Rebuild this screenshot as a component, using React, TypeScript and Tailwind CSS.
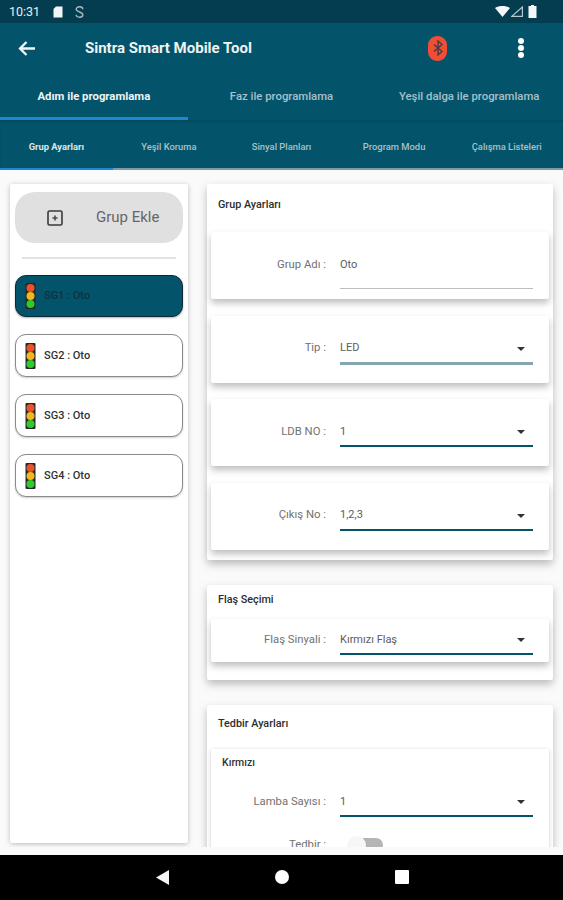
import React from "react";

function Light() {
  return (
    <svg width="11" height="26" viewBox="0 0 11 26" className="shrink-0">
      <rect x="0.500" y="0" width="10" height="26" rx="1" fill="#26292a" />
      <circle cx="5.5" cy="5" r="4" fill="#ea5329" />
      <circle cx="5.5" cy="13" r="4" fill="#f6b71c" />
      <circle cx="5.5" cy="21" r="4" fill="#2fcb2b" />
    </svg>
  );
}

function Group({ name, active }: { name: string; active?: boolean }) {
  return (
    <div
      className={
        active
          ? "h-[42px] rounded-[11px] border-[1.5px] border-[#0b2a36] bg-[#03546b] flex items-center pl-[9px] gap-[8px] shadow-[0_1px_2px_rgba(0,0,0,0.3)]"
          : "h-[43px] rounded-[11px] border-[1.5px] border-[#8a8a8a] bg-white flex items-center pl-[9px] gap-[8px] shadow-[0_1px_2px_rgba(0,0,0,0.2)]"
      }
    >
      <Light />
      <span className={active ? "pt-[1px] text-[11px] font-medium text-[#12303c]" : "pt-[1px] text-[11px] font-medium text-[#333333]"}>{name}</span>
    </div>
  );
}

function Caret() {
  return <span className="w-0 h-0 border-l-[4px] border-r-[4px] border-t-[4px] border-l-transparent border-r-transparent border-t-[#333333]" />;
}

function Field({
  label,
  value,
  select,
  line = "h-[2px] bg-[#03546b]",
  tall,
}: {
  label: string;
  value: string;
  select?: boolean;
  line?: string;
  tall?: boolean;
}) {
  return (
    <div className="flex items-start">
      <div className="w-[119px] h-[22px] shrink-0 pr-[4px] flex items-center justify-end text-[11.3px] text-[#717171]">{label}</div>
      <div className="w-[193px] ml-[10px] shrink-0 flex flex-col">
        <div className={(tall ? "h-[34px] pb-[12px] " : "h-[24px] pb-[2px] ") + "flex items-center justify-between pr-[8px] text-[11px] text-[#5c5c5c]"}>
          <span>{value}</span>
          {select && <Caret />}
        </div>
        <div className={line} />
      </div>
    </div>
  );
}

function Inner({ children, tall = true }: { children: React.ReactNode; tall?: boolean }) {
  return (
    <div className={(tall ? "h-[67px] pt-[22px] " : "h-[43px] pt-[10px] ") + "rounded-[2px] bg-white shadow-[0_4px_7px_rgba(0,0,0,0.26)]"}>
      {children}
    </div>
  );
}

function Title({ children }: { children: React.ReactNode }) {
  return <div className="pl-[11px] text-[10.8px] font-medium text-[#2d2d2d] leading-[12px]">{children}</div>;
}

export default function App() {
  return (
    <div className="w-[563px] h-[900px] flex flex-col overflow-hidden bg-[#fafafa] font-['Roboto',sans-serif]">
      {/* status bar */}
      <div className="h-[23px] shrink-0 bg-[#033d4f] flex items-center pl-[9px] pr-[26px] text-white">
        <span className="pt-[1px] text-[12.5px] text-[#e8eef0] w-[32px]">10:31</span>
        <svg width="10" height="12" viewBox="0 0 10 12" className="ml-[12px]"><path d="M3 0.500h6.500v11H0.500V3z" fill="#f2f5f6" /></svg>
        <svg width="9" height="12" viewBox="0 0 9 12" className="ml-[12px]" fill="none" stroke="#a8bac0" strokeWidth="1.4"><path d="M7.800 3.300C7.800 1.700 6.500 0.800 4.500 0.800S1.200 1.700 1.200 3.300 2.500 5.300 4.500 6s3.300 1.200 3.300 2.700-1.300 2.500-3.300 2.500-3.300-1-3.300-2.500" /></svg>
        <div className="flex-1" />
        <svg width="15" height="11" viewBox="0 0 15 11"><path d="M0 2C4.500-0.600 10.500-0.600 15 2L7.500 11z" fill="#f5f7f8" /></svg>
        <svg width="12" height="11" viewBox="0 0 12 11" className="ml-[1px]" fill="none" stroke="#b9c6cb" strokeWidth="1.200"><path d="M0.800 10.400H11.400V1z" /></svg>
        <svg width="9" height="13" viewBox="0 0 9 13" className="ml-[5px]"><path d="M3 0h3v1H8.500v12h-8V1H3z" fill="#f5f7f8" /></svg>
      </div>

      {/* app bar */}
      <div className="h-[48px] shrink-0 bg-[#03546b] flex items-center pt-[2px] text-white">
        <svg width="17" height="15" viewBox="0 0 17 15" className="ml-[18px]" fill="none" stroke="#f4f7f8" strokeWidth="2.300"><path d="M17 7.500H2M8.500 1L2 7.500 8.500 14" /></svg>
        <span className="ml-[50px] w-[167px] text-[15px] font-bold text-[#eef3f4] whitespace-nowrap">Sintra Smart Mobile Tool</span>
        <div className="ml-[176px] w-[19px] h-[25px] rounded-[9px] bg-[#ef4d36] flex items-center justify-center">
          <svg width="10" height="16" viewBox="0 0 10 16" fill="none" stroke="#3f3f47" strokeWidth="1.400"><path d="M1 4.500l8 7-4 3.500V1l4 3.500-8 7" /></svg>
        </div>
        <div className="ml-[71px] flex flex-col gap-[1px]">
          <span className="w-[6px] h-[6px] rounded-full bg-white" />
          <span className="w-[6px] h-[6px] rounded-full bg-white" />
          <span className="w-[6px] h-[6px] rounded-full bg-white" />
        </div>
      </div>

      {/* tabs 1 */}
      <div className="h-[49px] shrink-0 bg-[#03546b] flex flex-col text-[11.35px] font-medium">
        <div className="flex-1 grid grid-cols-3 pt-[6px]">
          <div className="flex items-center justify-center text-[#eef3f4] font-bold whitespace-nowrap">Adım ile programlama</div>
          <div className="flex items-center justify-center text-[#a9c0c8] whitespace-nowrap">Faz ile programlama</div>
          <div className="flex items-center justify-center text-[#a9c0c8] whitespace-nowrap">Yeşil dalga ile programlama</div>
        </div>
        <div className="h-[3px] w-[188px] bg-[#1e86d2]" />
      </div>

      {/* tabs 2 */}
      <div className="h-[50px] shrink-0 bg-[#03546b] flex flex-col text-[9.4px] font-medium shadow-[inset_0_2px_2px_rgba(0,0,0,0.12)]">
        <div className="flex-1 grid grid-cols-5 pt-[7px]">
          <div className="flex items-center justify-center text-[#dde6e9] font-bold whitespace-nowrap">Grup Ayarları</div>
          <div className="flex items-center justify-center text-[#a9c0c8] whitespace-nowrap">Yeşil Koruma</div>
          <div className="flex items-center justify-center text-[#a9c0c8] whitespace-nowrap">Sinyal Planları</div>
          <div className="flex items-center justify-center text-[#a9c0c8] whitespace-nowrap">Program Modu</div>
          <div className="flex items-center justify-center text-[#a9c0c8] whitespace-nowrap">Çalışma Listeleri</div>
        </div>
        <div className="h-[2px] bg-[#7f9aa4]">
          <div className="h-[2px] w-[113px] bg-[#1e86d2]" />
        </div>
      </div>

      {/* content */}
      <div className="h-[677px] shrink-0 overflow-hidden flex items-start pt-[14px] pl-[10px]">
        {/* left */}
        <div className="w-[178px] h-[659px] shrink-0 bg-white rounded-[2px] px-[5px] pt-[8px] shadow-[0_1px_5px_rgba(0,0,0,0.25)]">
          <div className="h-[51px] rounded-[20px] bg-[#e0e0e0] flex items-center pl-[32px]">
            <svg width="16" height="16" viewBox="0 0 16 16" fill="none"><rect x="1" y="1" width="14" height="14" rx="1.500" stroke="#3a3a3a" strokeWidth="1.600" /><path d="M8 5.500v5M5.500 8h5" stroke="#4a4a4a" strokeWidth="1.600" /></svg>
            <span className="ml-[33px] text-[15px] text-[#666666]">Grup Ekle</span>
          </div>
          <div className="mt-[14px] mx-[7px] h-[2px] bg-[#e2e2e2]" />
          <div className="mt-[16px] flex flex-col gap-[17px]">
            <Group name="SG1 : Oto" active />
            <Group name="SG2 : Oto" />
            <Group name="SG3 : Oto" />
            <Group name="SG4 : Oto" />
          </div>
        </div>

        {/* right */}
        <div className="ml-[19px] w-[346px] shrink-0 flex flex-col gap-[25px]">
          <div className="h-[376px] bg-white rounded-[2px] pt-[15px] px-[4px] shadow-[0_4px_8px_rgba(0,0,0,0.26)]">
            <div className="-ml-[4px]"><Title>Grup Ayarları</Title></div>
            <div className="mt-[21px] flex flex-col gap-[16.500px]">
              <Inner><Field label="Grup Adı :" value="Oto" tall line="h-px bg-[#bdbdbd]" /></Inner>
              <Inner><Field label="Tip :" value="LED" select line="h-[3px] bg-[#86a6af]" /></Inner>
              <Inner><Field label="LDB NO :" value="1" select /></Inner>
              <Inner><Field label="Çıkış No :" value="1,2,3" select /></Inner>
            </div>
          </div>

          <div className="h-[95px] bg-white rounded-[2px] pt-[9px] px-[4px] shadow-[0_4px_8px_rgba(0,0,0,0.26)]">
            <div className="-ml-[4px]"><Title>Flaş Seçimi</Title></div>
            <div className="mt-[13px]">
              <Inner tall={false}><Field label="Flaş Sinyali :" value="Kırmızı Flaş" select /></Inner>
            </div>
          </div>

          <div className="h-[200px] bg-white rounded-[2px] pt-[13px] px-[4px] shadow-[0_4px_8px_rgba(0,0,0,0.26)]">
            <div className="-ml-[4px]"><Title>Tedbir Ayarları</Title></div>
            <div className="mt-[19px] h-[130px] rounded-[2px] bg-white pt-[8px] shadow-[0_1px_4px_rgba(0,0,0,0.2)]">
              <div className="pl-[11px] text-[10.5px] font-medium text-[#333333] leading-[12px]">Kırmızı</div>
              <div className="mt-[22px]"><Field label="Lamba Sayısı :" value="1" select /></div>
              <div className="mt-[20px] flex items-center">
                <div className="w-[119px] pr-[4px] text-right text-[11.3px] text-[#717171]">Tedbir :</div>
                <div className="ml-[21px] relative w-[32px] h-[14px] rounded-full bg-[#b5b5b5]">
                  <span className="absolute -left-[3px] -top-[2px] w-[18px] h-[18px] rounded-full bg-[#f6f6f6] shadow-[0_1px_2px_rgba(0,0,0,0.12)]" />
                </div>
              </div>
            </div>
          </div>
        </div>
      </div>

      {/* strip */}
      <div className="h-[8px] shrink-0 bg-[#fafafa] relative z-10" />

      {/* nav */}
      <div className="h-[45px] shrink-0 bg-black relative z-10 flex items-center pb-[1px]">
        <svg width="13" height="15" viewBox="0 0 13 15" className="ml-[156px]"><path d="M13 0v15L0 7.500z" fill="#f5f5f5" /></svg>
        <span className="ml-[106px] w-[14px] h-[14px] rounded-full bg-white" />
        <span className="ml-[106px] w-[14px] h-[14px] bg-white rounded-[1px]" />
      </div>
    </div>
  );
}
